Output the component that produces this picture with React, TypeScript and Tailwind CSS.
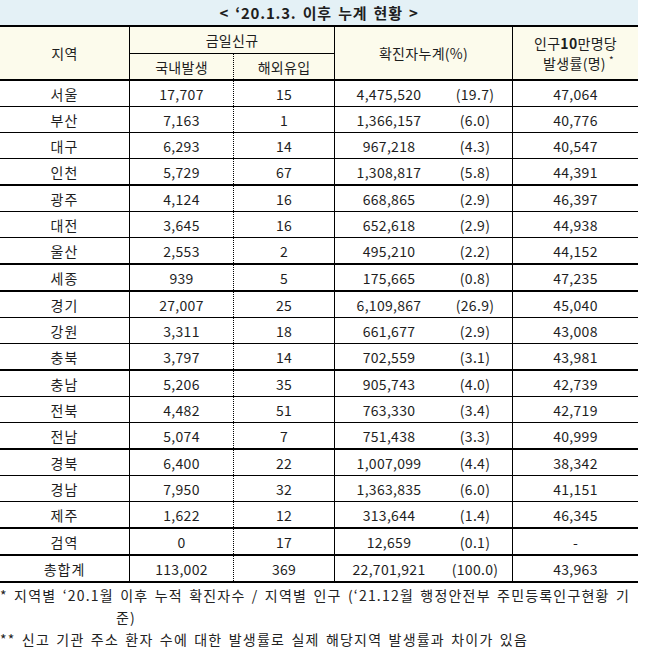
import React from "react";

type Row = { r: string; a: string; b: string; c: string; p: string; d: string; thick?: boolean };

const rows: Row[] = [
  { r: "서울", a: "17,707", b: "15", c: "4,475,520", p: "(19.7)", d: "47,064" },
  { r: "부산", a: "7,163", b: "1", c: "1,366,157", p: "(6.0)", d: "40,776" },
  { r: "대구", a: "6,293", b: "14", c: "967,218", p: "(4.3)", d: "40,547" },
  { r: "인천", a: "5,729", b: "67", c: "1,308,817", p: "(5.8)", d: "44,391", thick: true },
  { r: "광주", a: "4,124", b: "16", c: "668,865", p: "(2.9)", d: "46,397" },
  { r: "대전", a: "3,645", b: "16", c: "652,618", p: "(2.9)", d: "44,938" },
  { r: "울산", a: "2,553", b: "2", c: "495,210", p: "(2.2)", d: "44,152", thick: true },
  { r: "세종", a: "939", b: "5", c: "175,665", p: "(0.8)", d: "47,235", thick: true },
  { r: "경기", a: "27,007", b: "25", c: "6,109,867", p: "(26.9)", d: "45,040" },
  { r: "강원", a: "3,311", b: "18", c: "661,677", p: "(2.9)", d: "43,008" },
  { r: "충북", a: "3,797", b: "14", c: "702,559", p: "(3.1)", d: "43,981", thick: true },
  { r: "충남", a: "5,206", b: "35", c: "905,743", p: "(4.0)", d: "42,739" },
  { r: "전북", a: "4,482", b: "51", c: "763,330", p: "(3.4)", d: "42,719" },
  { r: "전남", a: "5,074", b: "7", c: "751,438", p: "(3.3)", d: "40,999", thick: true },
  { r: "경북", a: "6,400", b: "22", c: "1,007,099", p: "(4.4)", d: "38,342" },
  { r: "경남", a: "7,950", b: "32", c: "1,363,835", p: "(6.0)", d: "41,151" },
  { r: "제주", a: "1,622", b: "12", c: "313,644", p: "(1.4)", d: "46,345", thick: true },
  { r: "검역", a: "0", b: "17", c: "12,659", p: "(0.1)", d: "-", thick: true },
  { r: "총합계", a: "113,002", b: "369", c: "22,701,921", p: "(100.0)", d: "43,963", thick: true },
];

export default function App() {
  return (
    <div
      className="w-[653px] h-[651px] bg-white text-[#1e1e1e] text-[14px]"
      style={{ fontFamily: '"Noto Sans CJK KR", "Noto Sans", sans-serif' }}
    >
      <div className="w-[638px]">
        {/* Title */}
        <div className="h-[27px] bg-[#e4f1f6] border-b-2 border-black flex items-center justify-center font-bold text-[15px] leading-none tracking-[0.8px] [word-spacing:2px]">
          &lt; ‘20.1.3. 이후 누계 현황 &gt;
        </div>

        {/* Header */}
        <div className="h-[54px] bg-[#fcfbec] border-b-2 border-black flex leading-none tracking-[0.3px]">
          <div className="w-[130px] border-r border-black flex items-center justify-center">지역</div>
          <div className="w-[205px] border-r border-black flex flex-col">
            <div className="h-[27px] border-b border-black flex items-center justify-center">금일신규</div>
            <div className="h-[25px] flex">
              <div className="w-[104px] border-r border-dotted border-black flex items-center justify-center">국내발생</div>
              <div className="flex-1 flex items-center justify-center">해외유입</div>
            </div>
          </div>
          <div className="w-[178px] border-r border-black flex items-center justify-center">확진자누계(%)</div>
          <div className="w-[125px] flex flex-col items-center justify-center leading-[20px]">
            <div>
              인구<span className="font-bold">10</span>만명당
            </div>
            <div className="relative pr-[2px]">
              발생률(명)
              <span className="absolute -right-[6px] top-[2px] text-[10px] leading-none">*</span>
            </div>
          </div>
        </div>

        {/* Body */}
        {rows.map((row) => (
          <div
            key={row.r}
            className={`flex leading-none tracking-[0.3px] border-black ${row.thick ? "h-[27px] border-b-2" : "h-[26px] border-b"}`}
          >
            <div className="w-[130px] border-r border-black flex items-center justify-center tracking-[1px]">{row.r}</div>
            <div className="w-[104px] border-r border-dotted border-black flex items-center justify-center">{row.a}</div>
            <div className="w-[101px] border-r border-black flex items-center justify-center">{row.b}</div>
            <div className="w-[178px] border-r border-black flex">
              <div className="w-[108px] flex items-center justify-center">{row.c}</div>
              <div className="w-[64px] flex items-center justify-center">{row.p}</div>
            </div>
            <div className="w-[125px] flex items-center justify-center">{row.d}</div>
          </div>
        ))}
      </div>

      {/* Footnotes */}
      <div className="pt-[1px] text-[14px] leading-[22px] text-[#222] tracking-[1.2px] [word-spacing:2px]">
        <div className="whitespace-nowrap">
          * 지역별 ‘20.1월 이후 누적 확진자수 / 지역별 인구 (‘21.12월 행정안전부 주민등록인구현황 기
        </div>
        <div className="pl-[116px]">준)</div>
        <div className="whitespace-nowrap">** 신고 기관 주소 환자 수에 대한 발생률로 실제 해당지역 발생률과 차이가 있음</div>
      </div>
    </div>
  );
}
